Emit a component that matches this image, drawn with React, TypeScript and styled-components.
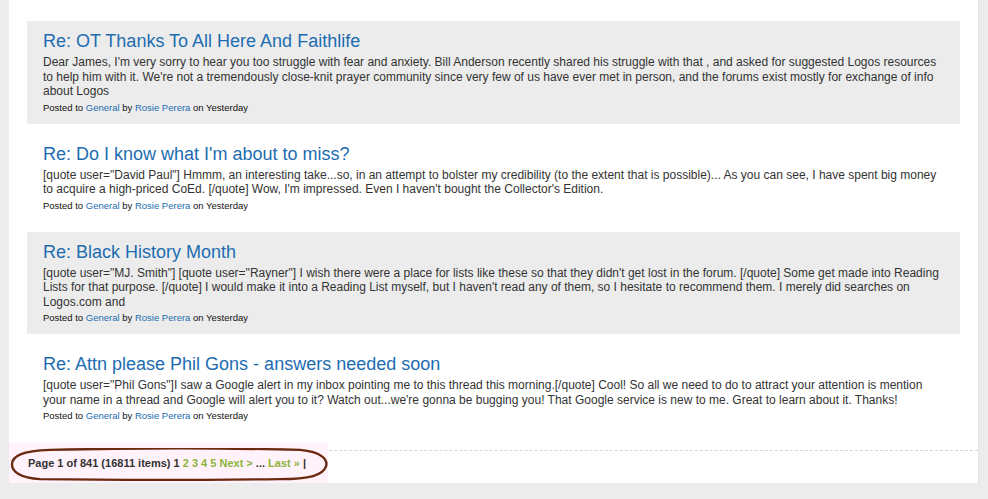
import React from "react";
import styled, { createGlobalStyle } from "styled-components";

const GlobalStyle = createGlobalStyle`
  body {
    margin: 0;
    background: #ececec;
    font-family: "Liberation Sans", Arial, sans-serif;
  }
`;

type Post = {
  title: string;
  body: string;
};

const posts: Post[] = [
  {
    title: "Re: OT Thanks To All Here And Faithlife",
    body: "Dear James, I'm very sorry to hear you too struggle with fear and anxiety. Bill Anderson recently shared his struggle with that , and asked for suggested Logos resources to help him with it. We're not a tremendously close-knit prayer community since very few of us have ever met in person, and the forums exist mostly for exchange of info about Logos",
  },
  {
    title: "Re: Do I know what I'm about to miss?",
    body: "[quote user=\"David Paul\"] Hmmm, an interesting take...so, in an attempt to bolster my credibility (to the extent that is possible)... As you can see, I have spent big money to acquire a high-priced CoEd. [/quote] Wow, I'm impressed. Even I haven't bought the Collector's Edition.",
  },
  {
    title: "Re: Black History Month",
    body: "[quote user=\"MJ. Smith\"] [quote user=\"Rayner\"] I wish there were a place for lists like these so that they didn't get lost in the forum. [/quote] Some get made into Reading Lists for that purpose. [/quote] I would make it into a Reading List myself, but I haven't read any of them, so I hesitate to recommend them. I merely did searches on Logos.com and",
  },
  {
    title: "Re: Attn please Phil Gons - answers needed soon",
    body: "[quote user=\"Phil Gons\"]I saw a Google alert in my inbox pointing me to this thread this morning.[/quote] Cool! So all we need to do to attract your attention is mention your name in a thread and Google will alert you to it? Watch out...we're gonna be bugging you! That Google service is new to me. Great to learn about it. Thanks!",
  },
];

function App() {
  return (
    <>
      <GlobalStyle />
      <Panel>
        <PostList>
          {posts.map((p, i) => (
            <PostItem key={i} $alt={i % 2 === 0}>
              <PostTitle href="#">{p.title}</PostTitle>
              <PostBody>{p.body}</PostBody>
              <PostMeta>
                Posted to <MetaLink href="#">General</MetaLink> by{" "}
                <MetaLink href="#">Rosie Perera</MetaLink> on Yesterday
              </PostMeta>
            </PostItem>
          ))}
        </PostList>
        <Pager>
          <Highlight />
          <Ring viewBox="0 0 318 34" preserveAspectRatio="none">
            <path
              d="M40 2 C 120 0, 220 0, 290 2 C 312 4, 318 12, 316 19 C 313 28, 300 32, 270 32 C 190 33, 100 33, 30 32 C 10 31, 2 24, 2 17 C 2 8, 12 3, 40 2 Z"
              fill="none"
              stroke="#6b2a10"
              strokeWidth="2.4"
            />
          </Ring>
          <PagerText>
            Page 1 of 841 (16811 items) 1 <PageLink href="#">2</PageLink>{" "}
            <PageLink href="#">3</PageLink> <PageLink href="#">4</PageLink>{" "}
            <PageLink href="#">5</PageLink> <PageLink href="#">Next &gt;</PageLink>{" "}
            ... <PageLink href="#">Last »</PageLink> |
          </PagerText>
        </Pager>
      </Panel>
    </>
  );
}

const Panel = styled.div`
  margin-left: 9px;
  width: 970px;
  height: 483px;
  background: #fff;
  border-right: 1px solid #e2e2e2;
  box-sizing: border-box;
`;

const PostList = styled.div`
  padding: 21px 18px 0 18px;
  display: flex;
  flex-direction: column;
  gap: 10px;
`;

const PostItem = styled.div<{ $alt: boolean }>`
  background: ${(p) => (p.$alt ? "#ececec" : "#fff")};
  padding: 8px 16px 8px 16px;
  display: flex;
  flex-direction: column;
`;

const PostTitle = styled.a`
  font-size: 18px;
  line-height: 24px;
  color: #1d6cb1;
  text-decoration: none;
  margin-bottom: 2px;
`;

const PostBody = styled.div`
  font-size: 12px;
  line-height: 14.5px;
  color: #333;
`;

const PostMeta = styled.div`
  font-size: 9.5px;
  line-height: 16px;
  margin-top: 1px;
  color: #111;
`;

const MetaLink = styled.a`
  color: #1d6cb1;
  text-decoration: none;
`;

const Pager = styled.div`
  position: relative;
  margin-top: 18px;
  border-top: 1px dashed #d6d6d6;
  height: 33px;
  box-sizing: border-box;
  padding: 6px 0 0 19px;
`;

const Highlight = styled.div`
  position: absolute;
  left: 0;
  top: -8px;
  width: 319px;
  bottom: 0;
  background: #fff2fa;
`;

const Ring = styled.svg`
  position: absolute;
  left: 1px;
  top: -3px;
  width: 318px;
  height: 33px;
  z-index: 2;
`;

const PagerText = styled.div`
  position: relative;
  z-index: 1;
  font-size: 11px;
  line-height: 13px;
  font-weight: bold;
  color: #333;
`;

const PageLink = styled.a`
  color: #8cb33a;
  text-decoration: none;
`;

export default App;
